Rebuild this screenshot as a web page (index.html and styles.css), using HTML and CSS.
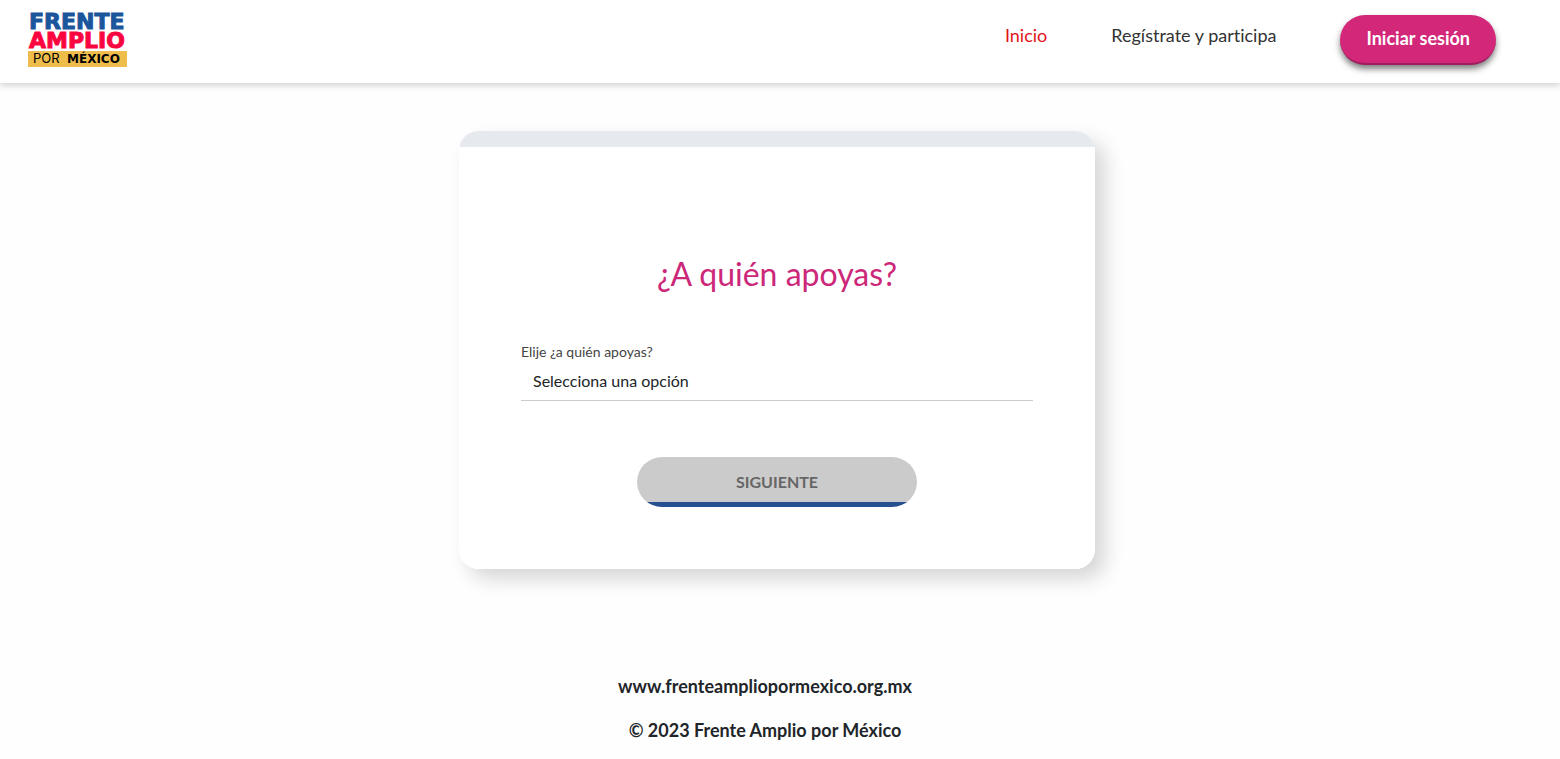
FILE: index.html
```html
<!DOCTYPE html>
<html lang="es">
<head>
<meta charset="utf-8">
<meta name="viewport" content="width=device-width, initial-scale=1">
<title>Frente Amplio por México</title>
<link rel="stylesheet" href="styles.css">
</head>
<body>
<header class="header">
  <a class="brand" href="#" aria-label="Frente Amplio por México">
    <svg class="logo" viewBox="0 0 100 56" role="img">
      <text class="logo-frente" x="1" y="17">FRENTE</text>
      <text class="logo-amplio" x="1" y="36">AMPLIO</text>
      <rect class="logo-band" x="0" y="39" width="99" height="16"/>
      <text class="logo-por" x="5" y="51">POR</text>
      <text class="logo-mexico" x="39" y="51">MÉXICO</text>
    </svg>
  </a>
  <nav class="nav">
    <a class="nav-link nav-link-active" href="#">Inicio</a>
    <a class="nav-link" href="#">Regístrate y participa</a>
    <button class="login" type="button">Iniciar sesión</button>
  </nav>
</header>
<main class="main">
  <form class="card">
    <h1 class="title">¿A quién apoyas?</h1>
    <label class="label" for="apoyo">Elije ¿a quién apoyas?</label>
    <select class="select" id="apoyo">
      <option>Selecciona una opción</option>
    </select>
    <button class="next" type="submit" disabled>SIGUIENTE</button>
  </form>
</main>
<footer class="footer">
  <a class="footer-link" href="#">www.frenteampliopormexico.org.mx</a>
  <p class="copyright">© 2023 Frente Amplio por México</p>
</footer>
</body>
</html>
```
FILE: styles.css
```css
* {
  box-sizing: border-box;
}

body {
  margin: 0;
  background: #fefefe;
  color: #212529;
  font-family: Lato, "Open Sans", sans-serif;
  font-variant-ligatures: none;
}

.header {
  display: flex;
  justify-content: space-between;
  align-items: flex-start;
  padding: 12px 64px 15px 28px;
  background: #fff;
  box-shadow: 0 3px 6px rgba(0, 0, 0, 0.16);
}

.logo {
  display: block;
  width: 100px;
  height: 56px;
  overflow: visible;
}

.logo-frente,
.logo-amplio,
.logo-mexico {
  font-family: "DejaVu Sans", sans-serif;
  font-weight: 700;
}

.logo-frente,
.logo-amplio {
  font-size: 22px;
  stroke-width: 1px;
}

.logo-frente {
  fill: #1b559c;
  stroke: #1b559c;
}

.logo-amplio {
  fill: #fb0540;
  stroke: #fb0540;
}

.logo-band {
  fill: #efbd4c;
}

.logo-por {
  font-family: Inter, sans-serif;
  font-size: 13px;
  font-weight: 400;
}

.logo-mexico {
  font-size: 12px;
}

.nav {
  display: flex;
  align-items: flex-start;
  gap: 64px;
  padding-top: 3px;
}

.nav-link {
  color: #333;
  font-size: 18px;
  line-height: 24px;
  padding-top: 8px;
  text-decoration: none;
}

.nav-link-active {
  color: #e2131a;
}

.login {
  padding: 12px 26px 14px;
  border: 0;
  border-bottom: 2px solid #a01c5e;
  border-radius: 25px;
  background: #d32779;
  box-shadow: 0 4px 6px rgba(0, 0, 0, 0.5);
  color: #fff;
  font-family: inherit;
  font-size: 18px;
  font-weight: 700;
  line-height: 22px;
}

.main {
  display: flex;
  justify-content: center;
  padding: 48px 6px 0 0;
}

.card {
  display: flex;
  flex-direction: column;
  width: 100%;
  max-width: 636px;
  padding: 123px 62px 62px;
  border-radius: 20px;
  background: linear-gradient(#e6e9ed 16px, #fff 16px);
  box-shadow: 10px 10px 20px rgba(0, 0, 0, 0.16);
}

.title {
  margin: 0 0 48px;
  color: #cc2778;
  font-size: 32px;
  font-weight: 400;
  line-height: 40px;
  text-align: center;
}

.label {
  color: #444;
  font-size: 14px;
  line-height: 20px;
}

.select {
  appearance: none;
  height: 39px;
  padding: 0 12px 2px;
  border: 0;
  border-bottom: 1px solid #ccc;
  border-radius: 0;
  background: transparent;
  color: #212529;
  font-family: inherit;
  font-size: 16px;
}

.next {
  align-self: center;
  width: 280px;
  height: 50px;
  margin-top: 56px;
  padding: 0 0 2px;
  border: 0;
  border-radius: 25px;
  background: linear-gradient(#cbcbcb 45px, #26508f 45px);
  color: #666;
  font-family: inherit;
  font-size: 16px;
  font-weight: 700;
}

.footer {
  display: flex;
  flex-direction: column;
  align-items: center;
  gap: 20px;
  padding: 105px 30px 16px 0;
  font-size: 18px;
  font-weight: 700;
  line-height: 24px;
}

.footer-link {
  color: inherit;
  text-decoration: none;
}

.copyright {
  margin: 0;
}
```
